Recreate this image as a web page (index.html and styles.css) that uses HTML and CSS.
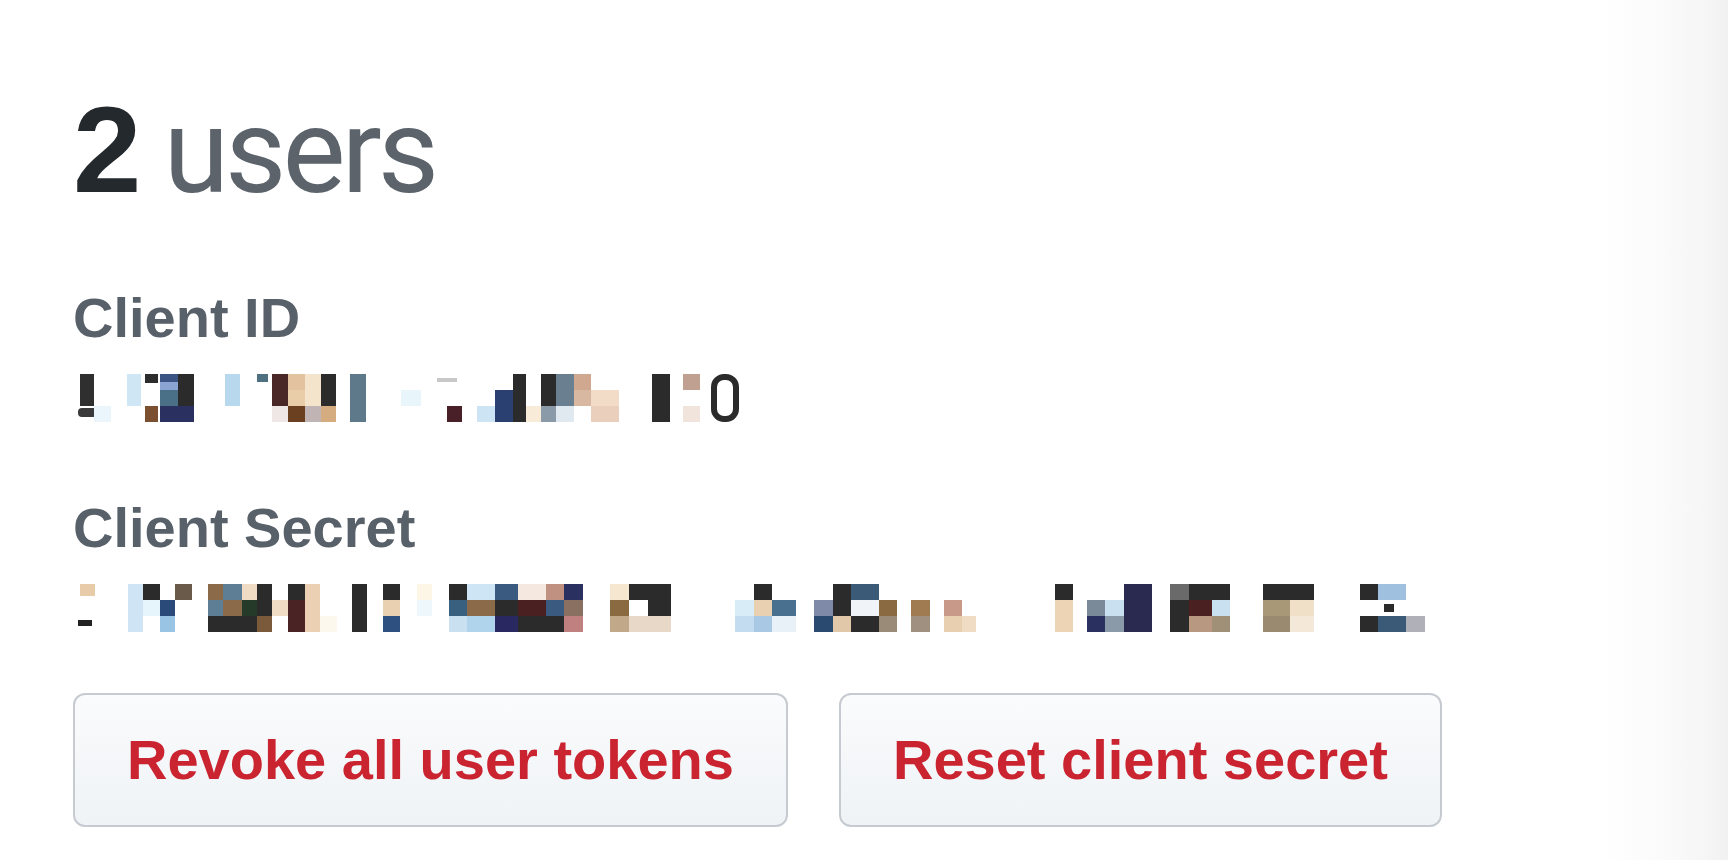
FILE: index.html
```html
<!DOCTYPE html>
<html lang="en">
<head>
<meta charset="utf-8">
<title>OAuth app</title>
<link rel="stylesheet" href="styles.css">
</head>
<body>
<main class="panel">
  <h2 class="summary"><span class="summary-count">2</span><span class="summary-noun">users</span></h2>

  <section class="field">
    <h3 class="field-label">Client ID</h3>
    <svg class="redacted" width="1380" height="48" viewBox="73 0 1380 48" aria-label="redacted client id">
      <rect x="80" y="0" width="14" height="32" fill="#2f2f2f"/>
      <rect x="78" y="34" width="19" height="9" rx="4" fill="#3a3a3a"/>
      <rect x="94" y="32" width="17" height="16" fill="#eaf5fc"/>
      <rect x="127" y="0" width="14" height="32" fill="#cfe6f5"/>
      <rect x="145" y="0" width="13" height="9" fill="#2c2c2c"/>
      <rect x="145" y="32" width="13" height="16" fill="#7a5030"/>
      <rect x="160" y="0" width="18" height="8" fill="#3b5483"/>
      <rect x="160" y="8" width="18" height="8" fill="#8aa4d4"/>
      <rect x="160" y="16" width="18" height="16" fill="#4a7088"/>
      <rect x="160" y="32" width="18" height="16" fill="#2a3060"/>
      <rect x="178" y="0" width="16" height="32" fill="#2b2b2b"/>
      <rect x="178" y="32" width="16" height="16" fill="#2a3060"/>
      <rect x="225" y="0" width="15" height="32" fill="#b8d8ee"/>
      <rect x="257" y="0" width="11" height="8" fill="#4f7080"/>
      <rect x="272" y="0" width="16" height="32" fill="#4a2828"/>
      <rect x="272" y="32" width="16" height="16" fill="#efe6e6"/>
      <rect x="288" y="0" width="17" height="16" fill="#e3c39f"/>
      <rect x="288" y="16" width="17" height="16" fill="#e8cda8"/>
      <rect x="288" y="32" width="17" height="16" fill="#6a4020"/>
      <rect x="305" y="0" width="16" height="32" fill="#f4e4cc"/>
      <rect x="305" y="32" width="16" height="16" fill="#c0b4b4"/>
      <rect x="321" y="0" width="15" height="32" fill="#2b2b2b"/>
      <rect x="321" y="32" width="15" height="16" fill="#d4ac80"/>
      <rect x="350" y="0" width="16" height="48" fill="#5e7a8a"/>
      <rect x="401" y="16" width="20" height="16" fill="#e8f6fc"/>
      <rect x="437" y="4" width="20" height="4" fill="#c8c8c8"/>
      <rect x="447" y="32" width="15" height="16" fill="#4a2028"/>
      <rect x="477" y="32" width="18" height="16" fill="#cce4f4"/>
      <rect x="495" y="16" width="18" height="32" fill="#2a4070"/>
      <rect x="513" y="0" width="13" height="48" fill="#2b2b2b"/>
      <rect x="526" y="32" width="15" height="16" fill="#f8ecd8"/>
      <rect x="541" y="0" width="15" height="32" fill="#2b2b2b"/>
      <rect x="541" y="32" width="15" height="16" fill="#8a9aa8"/>
      <rect x="556" y="0" width="18" height="32" fill="#6a8090"/>
      <rect x="556" y="32" width="18" height="16" fill="#e0e8f0"/>
      <rect x="574" y="0" width="17" height="16" fill="#d0a890"/>
      <rect x="574" y="16" width="17" height="16" fill="#d8b8a0"/>
      <rect x="591" y="16" width="28" height="16" fill="#f2dcc8"/>
      <rect x="591" y="32" width="28" height="16" fill="#ead0bc"/>
      <rect x="652" y="0" width="18" height="48" fill="#2b2b2b"/>
      <rect x="683" y="0" width="17" height="16" fill="#c0a090"/>
      <rect x="683" y="32" width="17" height="16" fill="#f0e4dc"/>
      <rect x="714" y="3" width="22" height="42" rx="10" fill="none" stroke="#2b2b2b" stroke-width="6"/>
    </svg>
  </section>

  <section class="field">
    <h3 class="field-label">Client Secret</h3>
    <svg class="redacted" width="1380" height="48" viewBox="73 0 1380 48" aria-label="redacted client secret">
      <rect x="80" y="0" width="15" height="12" fill="#e8cba8"/>
      <rect x="78" y="36" width="14" height="6" fill="#222"/>
      <rect x="128" y="0" width="15" height="48" fill="#cfe5f5"/>
      <rect x="143" y="0" width="17" height="16" fill="#2b2b2b"/>
      <rect x="143" y="16" width="17" height="16" fill="#e6f4fc"/>
      <rect x="160" y="16" width="15" height="16" fill="#2a4a7a"/>
      <rect x="160" y="32" width="15" height="16" fill="#9ac4e4"/>
      <rect x="175" y="0" width="17" height="16" fill="#6a5a4a"/>
      <rect x="208" y="0" width="15" height="16" fill="#8a6a48"/>
      <rect x="208" y="16" width="15" height="16" fill="#5e7e96"/>
      <rect x="208" y="32" width="15" height="16" fill="#2b2b2b"/>
      <rect x="223" y="0" width="19" height="16" fill="#5e7e96"/>
      <rect x="223" y="16" width="19" height="16" fill="#8a6a48"/>
      <rect x="223" y="32" width="19" height="16" fill="#2b2b2b"/>
      <rect x="242" y="0" width="15" height="16" fill="#f0dcc4"/>
      <rect x="242" y="16" width="15" height="16" fill="#263a2a"/>
      <rect x="242" y="32" width="15" height="16" fill="#2b2b2b"/>
      <rect x="257" y="0" width="15" height="32" fill="#2b2b2b"/>
      <rect x="257" y="32" width="15" height="16" fill="#7a5a3a"/>
      <rect x="272" y="16" width="16" height="16" fill="#f0dcc4"/>
      <rect x="288" y="0" width="17" height="16" fill="#2b2b2b"/>
      <rect x="288" y="16" width="17" height="32" fill="#4a2424"/>
      <rect x="305" y="0" width="15" height="48" fill="#ecd0b4"/>
      <rect x="320" y="32" width="17" height="16" fill="#fdf8ee"/>
      <rect x="352" y="0" width="15" height="48" fill="#2b2b2b"/>
      <rect x="383" y="0" width="17" height="16" fill="#2b2b2b"/>
      <rect x="383" y="16" width="17" height="16" fill="#e8d0b0"/>
      <rect x="383" y="32" width="17" height="16" fill="#2e5080"/>
      <rect x="417" y="0" width="15" height="16" fill="#fdf6e6"/>
      <rect x="417" y="16" width="15" height="16" fill="#eef8fc"/>
      <rect x="449" y="0" width="18" height="16" fill="#2b2b2b"/>
      <rect x="449" y="16" width="18" height="16" fill="#3a6080"/>
      <rect x="449" y="32" width="18" height="16" fill="#c8e0f0"/>
      <rect x="467" y="0" width="28" height="16" fill="#cde5f5"/>
      <rect x="467" y="16" width="28" height="16" fill="#8a6a48"/>
      <rect x="467" y="32" width="28" height="16" fill="#b0d4ec"/>
      <rect x="495" y="0" width="23" height="16" fill="#3a5a80"/>
      <rect x="495" y="16" width="23" height="16" fill="#2b2b2b"/>
      <rect x="495" y="32" width="23" height="16" fill="#2a2860"/>
      <rect x="518" y="0" width="28" height="16" fill="#f4e8e0"/>
      <rect x="518" y="16" width="28" height="16" fill="#4a2020"/>
      <rect x="518" y="32" width="28" height="16" fill="#2b2b2b"/>
      <rect x="546" y="0" width="18" height="16" fill="#c09080"/>
      <rect x="546" y="16" width="18" height="16" fill="#3a5a80"/>
      <rect x="546" y="32" width="18" height="16" fill="#2b2b2b"/>
      <rect x="564" y="0" width="19" height="16" fill="#2a3060"/>
      <rect x="564" y="16" width="19" height="16" fill="#8a7060"/>
      <rect x="564" y="32" width="19" height="16" fill="#c08080"/>
      <rect x="610" y="0" width="19" height="16" fill="#f6e8d0"/>
      <rect x="610" y="16" width="19" height="16" fill="#8a6a40"/>
      <rect x="610" y="32" width="19" height="16" fill="#c0a888"/>
      <rect x="629" y="0" width="19" height="16" fill="#2b2b2b"/>
      <rect x="629" y="32" width="19" height="16" fill="#e8d8c8"/>
      <rect x="648" y="0" width="23" height="32" fill="#2b2b2b"/>
      <rect x="648" y="32" width="23" height="16" fill="#e8d8c8"/>
      <rect x="735" y="16" width="19" height="16" fill="#d8ecf8"/>
      <rect x="735" y="32" width="19" height="16" fill="#c4dcf0"/>
      <rect x="754" y="0" width="18" height="16" fill="#2b2b2b"/>
      <rect x="754" y="16" width="18" height="16" fill="#e8d0b0"/>
      <rect x="754" y="32" width="18" height="16" fill="#a8c8e4"/>
      <rect x="772" y="16" width="24" height="16" fill="#4a7090"/>
      <rect x="772" y="32" width="24" height="16" fill="#e8f0f8"/>
      <rect x="814" y="16" width="19" height="16" fill="#7f8aa8"/>
      <rect x="814" y="32" width="19" height="16" fill="#2a4a70"/>
      <rect x="833" y="0" width="18" height="32" fill="#2b2b2b"/>
      <rect x="833" y="32" width="18" height="16" fill="#e0c8a8"/>
      <rect x="851" y="0" width="28" height="16" fill="#3a5a78"/>
      <rect x="851" y="16" width="28" height="16" fill="#f0f4f8"/>
      <rect x="851" y="32" width="28" height="16" fill="#2b2b2b"/>
      <rect x="879" y="16" width="18" height="16" fill="#8a6a40"/>
      <rect x="879" y="32" width="18" height="16" fill="#9a8a78"/>
      <rect x="911" y="16" width="19" height="16" fill="#a07a50"/>
      <rect x="911" y="32" width="19" height="16" fill="#a09080"/>
      <rect x="944" y="16" width="18" height="16" fill="#c89888"/>
      <rect x="944" y="32" width="18" height="16" fill="#e8cfb0"/>
      <rect x="962" y="32" width="14" height="16" fill="#f0dcc4"/>
      <rect x="1055" y="0" width="18" height="16" fill="#2b2b2b"/>
      <rect x="1055" y="16" width="18" height="32" fill="#ecd4b4"/>
      <rect x="1087" y="16" width="18" height="16" fill="#7a8a98"/>
      <rect x="1087" y="32" width="18" height="16" fill="#2a3060"/>
      <rect x="1105" y="16" width="19" height="16" fill="#c8e0f0"/>
      <rect x="1105" y="32" width="19" height="16" fill="#8a9aa8"/>
      <rect x="1124" y="0" width="28" height="48" fill="#2a2a50"/>
      <rect x="1170" y="0" width="19" height="16" fill="#6a6a6a"/>
      <rect x="1170" y="16" width="19" height="32" fill="#2b2b2b"/>
      <rect x="1189" y="0" width="23" height="16" fill="#2b2b2b"/>
      <rect x="1189" y="16" width="23" height="16" fill="#4a2020"/>
      <rect x="1189" y="32" width="23" height="16" fill="#b89880"/>
      <rect x="1212" y="0" width="18" height="16" fill="#2b2b2b"/>
      <rect x="1212" y="16" width="18" height="16" fill="#c8e0f0"/>
      <rect x="1212" y="32" width="18" height="16" fill="#a09078"/>
      <rect x="1263" y="0" width="27" height="16" fill="#2b2b2b"/>
      <rect x="1263" y="16" width="27" height="16" fill="#a89878"/>
      <rect x="1263" y="32" width="27" height="16" fill="#9a8a70"/>
      <rect x="1290" y="0" width="24" height="16" fill="#2b2b2b"/>
      <rect x="1290" y="16" width="24" height="16" fill="#f0e0c8"/>
      <rect x="1290" y="32" width="24" height="16" fill="#f4e8d8"/>
      <rect x="1360" y="0" width="18" height="16" fill="#2b2b2b"/>
      <rect x="1360" y="32" width="18" height="16" fill="#2b2b2b"/>
      <rect x="1378" y="0" width="28" height="16" fill="#a0c0e0"/>
      <rect x="1384" y="20" width="10" height="8" fill="#2b2b2b"/>
      <rect x="1378" y="32" width="28" height="16" fill="#3a5a78"/>
      <rect x="1406" y="32" width="19" height="16" fill="#b0b0b8"/>
    </svg>
  </section>

  <div class="actions">
    <button class="btn btn-danger" type="button">Revoke all user tokens</button>
    <button class="btn btn-danger" type="button">Reset client secret</button>
  </div>
</main>
</body>
</html>
```

FILE: styles.css
```css
html, body {
  margin: 0;
  padding: 0;
}

body {
  min-height: 100vh;
  font-family: "Liberation Sans", Arial, sans-serif;
  background: linear-gradient(to right, #ffffff 0, #ffffff 1600px, #fbfbfb 1660px, #f6f6f6 1705px, #f1f1f1 1728px);
}

.panel {
  padding: 88px 0 0 73px;
}

.summary {
  display: flex;
  align-items: baseline;
  gap: 22px;
  height: 123px;
  margin: 0;
  font-size: 123px;
  line-height: 123px;
  font-weight: 400;
}

.summary-count {
  font-weight: 700;
  color: #24292e;
}

.summary-noun {
  font-family: Roboto, "Liberation Sans", Arial, sans-serif;
  font-size: 119px;
  font-weight: 400;
  color: #5c636a;
  letter-spacing: -4px;
}

.field {
  margin-top: 67px;
}

.field + .field {
  margin-top: 66px;
}

.field-label {
  margin: 0;
  font-size: 56px;
  line-height: 80px;
  font-weight: 700;
  color: #586069;
}

.redacted {
  display: block;
  margin-top: 16px;
}

.actions {
  display: flex;
  gap: 51px;
  margin-top: 61px;
}

.btn {
  font-family: "Liberation Sans", Arial, sans-serif;
  font-size: 56px;
  line-height: 80px;
  font-weight: 700;
  padding: 25px 52px;
  border: 2px solid #c6cbd1;
  border-radius: 12px;
  background: linear-gradient(#fafbfc, #eff3f6);
  cursor: pointer;
}

.btn-danger {
  color: #cb2431;
}
```
